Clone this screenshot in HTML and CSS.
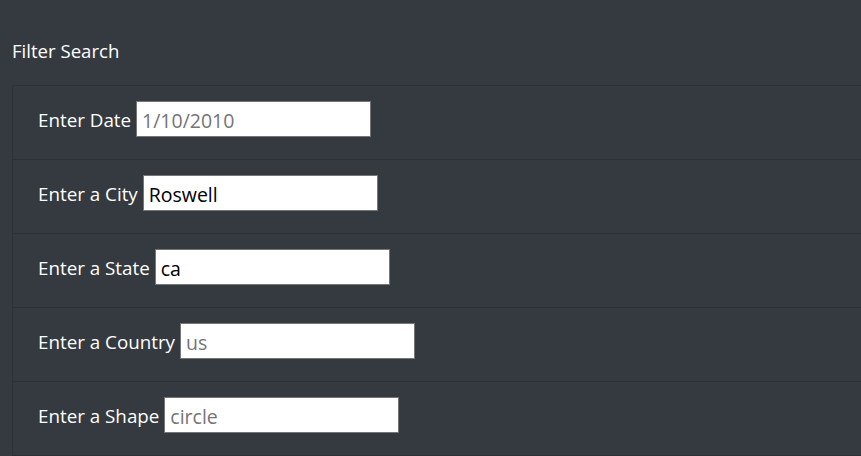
FILE: index.html
```
<!DOCTYPE html>
<html>
<head>
<meta charset="utf-8">
<link rel="stylesheet" href="styles.css">
</head>
<body>
<div class="panel">
  <h3 class="title">Filter Search</h3>
  <ul class="filters">
    <li class="item"><label class="lbl">Enter Date</label> <input class="field" type="text" placeholder="1/10/2010"></li>
    <li class="item"><label class="lbl">Enter a City</label> <input class="field" type="text" value="Roswell"></li>
    <li class="item"><label class="lbl">Enter a State</label> <input class="field" type="text" value="ca"></li>
    <li class="item"><label class="lbl">Enter a Country</label> <input class="field" type="text" placeholder="us"></li>
    <li class="item"><label class="lbl">Enter a Shape</label> <input class="field" type="text" placeholder="circle"></li>
  </ul>
</div>
</body>
</html>
```
FILE: styles.css
```
html, body {
  margin: 0;
  padding: 0;
  background: #343a40;
  overflow: hidden;
}
body {
  font-family: "Open Sans", "Noto Sans", sans-serif;
  color: #fff;
  font-size: 18.8px;
}
.panel {
  padding: 37px 0 0 12px;
}
.title {
  margin: 0;
  font-size: 18.6px;
  font-weight: 400;
  line-height: 27px;
}
.filters {
  list-style: none;
  margin: 21px 0 0 0;
  padding: 0;
  border-left: 1px solid #2c3136;
  border-top: 1px solid #2c3136;
}
.item {
  padding: 14px 20px 21px 25px;
  border-bottom: 1px solid #2c3136;
  display: flex;
  align-items: center;
  height: 38px;
}
.lbl {
  line-height: 26px;
  padding-top: 2px;
}
.field {
  margin-left: 5px;
  width: 235px;
  height: 36px;
  box-sizing: border-box;
  border: 1px solid #767676;
  border-radius: 0;
  padding: 2px 5px 0;
  font-family: inherit;
  font-size: 19.5px;
  color: #000;
  background: #fff;
  outline: none;
}
.field::placeholder {
  color: #757575;
}
```
